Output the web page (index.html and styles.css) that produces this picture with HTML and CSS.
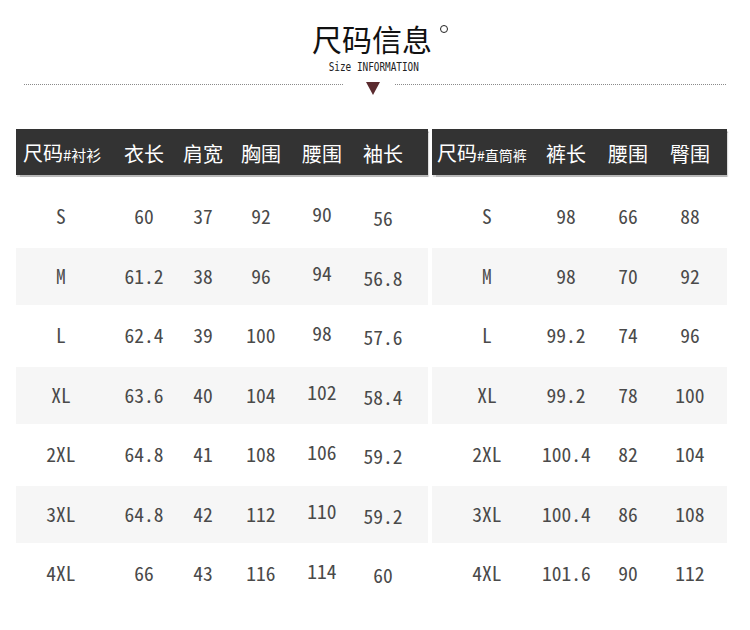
FILE: index.html
```html
<!DOCTYPE html>
<html lang="zh-CN">
<head>
<meta charset="utf-8">
<title>尺码信息</title>
<link rel="stylesheet" href="styles.css">
</head>
<body>
<div class="page">
  <header class="heading">
    <h1 class="title"><span class="title-text">尺码信息</span><span class="ring"></span></h1>
    <p class="subtitle"><span class="subtitle-text">Size INFORMATION</span></p>
    <div class="divider">
      <span class="dots dots-left"></span>
      <svg class="tri" width="14" height="13" viewBox="0 0 14 13"><polygon points="0,0 14,0 7,13" fill="#5b2b2f"/></svg>
      <span class="dots dots-right"></span>
    </div>
  </header>

  <div class="tables">
    <section class="table table-shirt">
      <div class="row head">
        <div class="cell first"><span class="big">尺码</span><span class="small">#衬衫</span></div>
        <div class="cell">衣长</div>
        <div class="cell">肩宽</div>
        <div class="cell">胸围</div>
        <div class="cell">腰围</div>
        <div class="cell">袖长</div>
      </div>
      <div class="row"><div class="cell">S</div><div class="cell">60</div><div class="cell">37</div><div class="cell">92</div><div class="cell up">90</div><div class="cell down">56</div></div>
      <div class="row alt"><div class="cell">M</div><div class="cell">61.2</div><div class="cell">38</div><div class="cell">96</div><div class="cell up">94</div><div class="cell down">56.8</div></div>
      <div class="row"><div class="cell">L</div><div class="cell">62.4</div><div class="cell">39</div><div class="cell">100</div><div class="cell up">98</div><div class="cell down">57.6</div></div>
      <div class="row alt"><div class="cell">XL</div><div class="cell">63.6</div><div class="cell">40</div><div class="cell">104</div><div class="cell up">102</div><div class="cell down">58.4</div></div>
      <div class="row"><div class="cell">2XL</div><div class="cell">64.8</div><div class="cell">41</div><div class="cell">108</div><div class="cell up">106</div><div class="cell down">59.2</div></div>
      <div class="row alt"><div class="cell">3XL</div><div class="cell">64.8</div><div class="cell">42</div><div class="cell">112</div><div class="cell up">110</div><div class="cell down">59.2</div></div>
      <div class="row"><div class="cell">4XL</div><div class="cell">66</div><div class="cell">43</div><div class="cell">116</div><div class="cell up">114</div><div class="cell down">60</div></div>
    </section>

    <section class="table table-pants">
      <div class="row head">
        <div class="cell first"><span class="big">尺码</span><span class="small tiny">#直筒裤</span></div>
        <div class="cell">裤长</div>
        <div class="cell">腰围</div>
        <div class="cell">臀围</div>
      </div>
      <div class="row"><div class="cell">S</div><div class="cell">98</div><div class="cell">66</div><div class="cell">88</div></div>
      <div class="row alt"><div class="cell">M</div><div class="cell">98</div><div class="cell">70</div><div class="cell">92</div></div>
      <div class="row"><div class="cell">L</div><div class="cell">99.2</div><div class="cell">74</div><div class="cell">96</div></div>
      <div class="row alt"><div class="cell">XL</div><div class="cell">99.2</div><div class="cell">78</div><div class="cell">100</div></div>
      <div class="row"><div class="cell">2XL</div><div class="cell">100.4</div><div class="cell">82</div><div class="cell">104</div></div>
      <div class="row alt"><div class="cell">3XL</div><div class="cell">100.4</div><div class="cell">86</div><div class="cell">108</div></div>
      <div class="row"><div class="cell">4XL</div><div class="cell">101.6</div><div class="cell">90</div><div class="cell">112</div></div>
    </section>
  </div>
</div>
</body>
</html>
```

FILE: styles.css
```css
* { box-sizing: border-box; }

html, body {
  margin: 0;
  padding: 0;
  background: #ffffff;
}

.page {
  width: 750px;
  height: 630px;
  overflow: hidden;
  font-family: "Noto Sans CJK SC", "DejaVu Sans", sans-serif;
}

.heading {
  padding-top: 21px;
}

.title {
  margin: 0 0 0 312px;
  height: 34px;
  display: flex;
  align-items: flex-start;
  font-weight: 400;
  font-size: 30px;
  line-height: 34px;
  color: #111;
}

.ring {
  width: 8px;
  height: 8px;
  border: 1.3px solid #222;
  border-radius: 50%;
  margin: 4px 0 0 8px;
}

.subtitle {
  margin: 6px 0 0;
  height: 12px;
  display: flex;
  justify-content: center;
  padding-right: 3px;
}

.subtitle-text {
  display: inline-block;
  font-family: "DejaVu Sans Mono", "Liberation Mono", monospace;
  font-size: 12px;
  line-height: 12px;
  color: #222;
  transform: scaleX(0.78);
  white-space: nowrap;
}

.divider {
  display: flex;
  align-items: flex-start;
  height: 20px;
  margin-top: 10px;
  padding-left: 24px;
  padding-right: 23px;
}

.dots {
  height: 1px;
  margin-top: 1px;
  background-image: linear-gradient(to right, #8a8a8a 50%, transparent 50%);
  background-size: 2px 1px;
}

.dots-left { width: 320px; }
.dots-right { flex: 1; }

.tri {
  display: block;
  margin: -1px 15px 0 22px;
}

.tables {
  display: flex;
  gap: 4px;
  margin-top: 26px;
  padding-left: 16px;
}

.table {
  display: flex;
  flex-direction: column;
  gap: 2.5px;
}

.table-shirt { width: 412px; }
.table-pants { width: 295px; }

.table-shirt .row {
  display: grid;
  grid-template-columns: 90px 76px 42px 74px 48px 74px;
}

.table-pants .row {
  display: grid;
  grid-template-columns: 110px 48px 76px 48px;
}

.row {
  height: 57px;
  align-items: center;
  font-family: "Noto Sans CJK SC", "DejaVu Sans", sans-serif;
  font-feature-settings: "hwid" 1;
  font-size: 19.5px;
  line-height: 24px;
  color: #4a4a4a;
}

.row:not(.head) { padding-bottom: 2px; }

.row.alt { background: #f6f6f6; }

.row.head {
  height: 46px;
  margin-bottom: 11px;
  background: #333333;
  box-shadow: 1px 1.5px 1px rgba(0, 0, 0, 0.28);
  color: #fff;
  font-feature-settings: normal;
  font-size: 20px;
  padding-top: 4px;
}

.cell {
  text-align: center;
  white-space: nowrap;
}

.row:not(.head) .cell.up { padding-bottom: 5px; }
.row:not(.head) .cell.down { padding-top: 4px; }

.head .cell.first {
  text-align: left;
  padding-left: 7px;
}

.table-pants .head .cell.first { padding-left: 5px; }

.big { font-size: 20px; }
.small { font-size: 15px; }
.small.tiny { font-size: 14px; }
```
